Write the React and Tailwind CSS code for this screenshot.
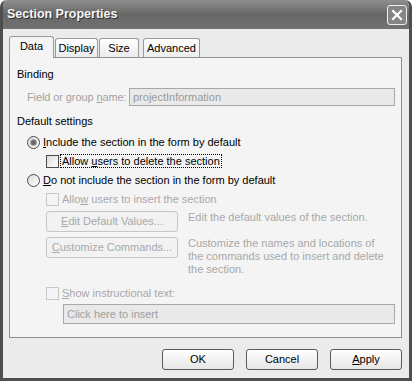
import React from "react";

const font = { fontFamily: '"Liberation Sans", Arial, sans-serif' };

const Radio = ({ checked }) => (
  <span className="relative inline-flex w-[13px] h-[13px] rounded-full border border-[#4a4a4a] bg-gradient-to-br from-[#dcdcdc] to-white items-center justify-center shrink-0">
    {checked && <span className="w-[5px] h-[5px] rounded-full bg-[#6a6a6a] ring-1 ring-[#a8a8a8]" />}
  </span>
);

const Checkbox = ({ disabled }) => (
  <span
    className={
      "inline-block w-[13px] h-[13px] shrink-0 border " +
      (disabled
        ? "border-[#c8c8c8] bg-[#f4f4f4]"
        : "border-[#4a4a4a] bg-gradient-to-br from-[#dcdcdc] to-white")
    }
  />
);

const Button = ({ children, disabled, className = "" }) => (
  <div
    className={
      "flex items-center justify-center h-[21px] rounded-[3px] border text-[11px] " +
      (disabled
        ? "border-[#c6c6c6] text-[#a8a8a8] bg-[#f2f2f2] "
        : "border-[#5a5a5a] text-black bg-gradient-to-b from-white to-[#e6e6e6] ") +
      className
    }
  >
    {children}
  </div>
);

const Tab = ({ label, active, width }) => (
  <div
    className={
      "flex items-center justify-center border border-[#9a9a9a] rounded-t-[3px] text-[11px] text-black " +
      (active
        ? "h-[22px] bg-[#f4f4f4] border-b-0 -mb-px z-10 pb-[3px]"
        : "h-[19px] bg-gradient-to-b from-white to-[#ececec] border-b-0 ml-px")
    }
    style={{ width }}
  >
    {label}
  </div>
);

const App = () => {
  return (
    <div className="w-[412px] h-[381px] bg-white" style={font}>
      <div className="w-[412px] h-[381px] flex flex-col bg-[#ebebeb] border-x-[3px] border-b-[3px] border-[#4e4e4e] rounded-t-[7px] overflow-hidden">
        {/* title bar */}
        <div className="h-[29px] -mx-[3px] flex items-center justify-between pl-[7px] pr-[5px] bg-gradient-to-b from-[#8e8e8e] via-[#676767] to-[#727272] rounded-t-[7px]">
          <span className="text-[12.5px] font-bold text-[#f6f6f6] [text-shadow:1px_1px_0_#303030]">
            Section Properties
          </span>
          <span className="w-[20px] h-[20px] rounded-[3px] border border-[#f0f0f0] bg-[#858585] flex items-center justify-center">
            <svg width="12" height="12" viewBox="0 0 12 12">
              <path d="M2 2 L10 10 M10 2 L2 10" stroke="#fff" strokeWidth="2.2" strokeLinecap="square" />
            </svg>
          </span>
        </div>

        {/* body */}
        <div className="flex-1 flex flex-col pl-[6px] pr-[7px] pt-[7px]">
          <div className="flex items-end">
            <Tab label="Data" active width={45} />
            <Tab label="Display" width={43} />
            <Tab label="Size" width={40} />
            <div className="w-[3px]" />
            <Tab label="Advanced" width={57} />
          </div>

          <div className="h-[281px] border border-[#8f8f8f] bg-[#f4f4f4] flex flex-col text-[11px] text-black">
            <div className="mt-[9px] pl-[7px] h-[14px] leading-[14px]">Binding</div>

            <div className="mt-[7px] flex items-center pl-[17px] pr-[6px]">
              <span className="text-[#a2a2a2] w-[102px] tracking-[-0.1px]">
                Field or group <u>n</u>ame:
              </span>
              <div className="flex-1 h-[18px] border border-[#a8a8a8] bg-[#e9e9e9] text-[#9a9a9a] pl-[3px] leading-[16px]">
                projectInformation
              </div>
            </div>

            <div className="mt-[8px] pl-[7px] h-[14px] leading-[14px]">Default settings</div>

            <div className="mt-[7px] pl-[17px] h-[14px] flex items-center gap-[3px]">
              <Radio checked />
              <span>
                <u>I</u>nclude the section in the form by default
              </span>
            </div>

            <div className="mt-[5px] pl-[36px] h-[14px] flex items-center gap-[1px]">
              <Checkbox />
              <span className="border border-dotted border-black px-[1px] leading-[12px]">
                Allow <u>u</u>sers to delete the section
              </span>
            </div>

            <div className="mt-[5px] pl-[17px] h-[14px] flex items-center gap-[3px]">
              <Radio />
              <span>
                <u>D</u>o not include the section in the form by default
              </span>
            </div>

            <div className="mt-[5px] pl-[36px] h-[14px] flex items-center gap-[3px] text-[#a8a8a8]">
              <Checkbox disabled />
              <span>
                Allo<u>w</u> users to insert the section
              </span>
            </div>

            <div className="mt-[5px] pl-[36px] flex items-start gap-[10px]">
              <Button disabled className="w-[132px]">
                <span>
                  <u>E</u>dit Default Values...
                </span>
              </Button>
              <span className="text-[#a8a8a8] leading-[13px]">
                Edit the default values of the section.
              </span>
            </div>

            <div className="mt-[5px] pl-[36px] pr-[10px] flex items-start gap-[10px]">
              <Button disabled className="w-[132px] shrink-0">
                <span>
                  <u>C</u>ustomize Commands...
                </span>
              </Button>
              <span className="text-[#a8a8a8] leading-[13px]">
                Customize the names and locations of the commands used to insert and delete the section.
              </span>
            </div>

            <div className="mt-[10px] pl-[36px] h-[14px] flex items-center gap-[3px] text-[#a8a8a8]">
              <Checkbox disabled />
              <span>
                <u>S</u>how instructional text:
              </span>
            </div>

            <div className="mt-[4px] pl-[53px] pr-[6px]">
              <div className="h-[20px] border border-[#a8a8a8] bg-[#e9e9e9] text-[#a0a0a0] pl-[3px] leading-[18px]">
                Click here to insert
              </div>
            </div>
          </div>

          <div className="mt-[11px] flex justify-end gap-[12px]">
            <Button className="w-[72px]">OK</Button>
            <Button className="w-[72px]">Cancel</Button>
            <Button className="w-[72px]">
              <span>
                <u>A</u>pply
              </span>
            </Button>
          </div>
        </div>
      </div>
    </div>
  );
};

export default App;
